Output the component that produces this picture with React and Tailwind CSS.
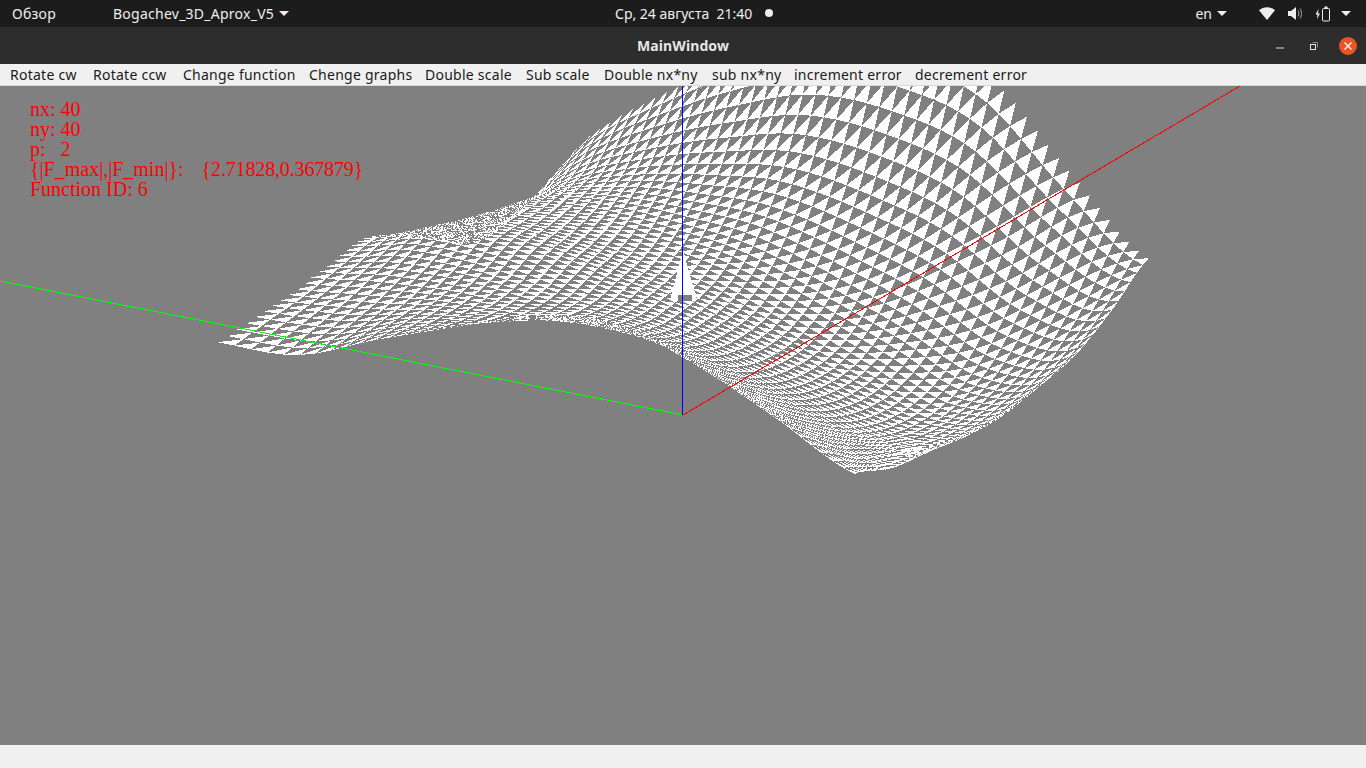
import { useMemo } from 'react';

// menu bar items, widths taken from the Qt menu bar spacing
const MENU = [
  { label: 'Rotate cw', w: 'w-[83px]' },
  { label: 'Rotate ccw', w: 'w-[90px]' },
  { label: 'Change function', w: 'w-[126px]' },
  { label: 'Chenge graphs', w: 'w-[116px]' },
  { label: 'Double scale', w: 'w-[101px]' },
  { label: 'Sub scale', w: 'w-[78px]' },
  { label: 'Double nx*ny', w: 'w-[108px]' },
  { label: 'sub nx*ny', w: 'w-[82px]' },
  { label: 'increment error', w: 'w-[121px]' },
  { label: 'decrement error', w: 'w-[120px]' },
];

const NU = 56;
const NV = 50;
const HALF_X = 294;
const HALF_Y = 368;

// surface heights along the four edges, evenly spaced keys
const Z_AB = [284, 292, 383, 467, 548, 568, 494, 385, 266];
const Z_DC = [149, 429, 607, 760, 880, 900, 834, 603, 390];
const Z_AD = [284, 294, 301, 320, 335, 274, 202, 130, 149];
const Z_BC = [266, 219, 202, 188, 184, 202, 232, 301, 390];
const SADDLE = 449;

function sample(pts, t) {
  const f = Math.min(Math.max(t, 0), 1) * (pts.length - 1);
  const i = Math.min(Math.floor(f), pts.length - 2);
  const s = f - i;
  const p0 = pts[Math.max(i - 1, 0)];
  const p1 = pts[i];
  const p2 = pts[i + 1];
  const p3 = pts[Math.min(i + 2, pts.length - 1)];
  return 0.5 * (2 * p1 + (p2 - p0) * s + (2 * p0 - 5 * p1 + 4 * p2 - p3) * s * s + (3 * p1 - p0 - 3 * p2 + p3) * s * s * s);
}

function height(u, v) {
  const ruledU = (1 - v) * sample(Z_AB, u) + v * sample(Z_DC, u);
  const ruledV = (1 - u) * sample(Z_AD, v) + u * sample(Z_BC, v);
  const bi = (1 - u) * (1 - v) * Z_AB[0] + u * (1 - v) * Z_AB[8] + (1 - u) * v * Z_DC[0] + u * v * Z_DC[8];
  // the valley behind the front hump, flatter at the front so rows pile up there
  const valley = 6.75 * u * u * (1 - u) * 4 * v * (1 - v) * (0.55 + 0.9 * v);
  return ruledU + ruledV - bi - SADDLE * valley;
}

// u runs from A to B, v from the front edge to the far edge
function surfacePoint(i, j) {
  const a = i / NU;
  const b = j / NV;
  // cell sizes are not even: bigger round A, smaller round B and along the far edge
  const u = a - (0.15 * b * Math.sin(2 * Math.PI * a)) / (2 * Math.PI) + (0.5 * (1 - b) * (1 - a) * Math.sin(Math.PI * a)) / Math.PI;
  const v = b + (0.2 * (1 - a) - 0.1 * a) * (1 - b) * Math.sin(Math.PI * b);
  const X = (2 * v - 1) * HALF_X;
  const Y = (1 - 2 * u) * HALF_Y;
  const Z = height(u, v);
  return [683 + 0.5 * X - 0.866 * Y, 415 - 0.482 * (0.612 * X + 0.354 * Y + 0.707 * Z)];
}

function buildMesh() {
  let d = '';
  for (let i = 0; i < NU; i++) {
    for (let j = 0; j < NV; j++) {
      const p1 = surfacePoint(i, j);
      const p2 = surfacePoint(i + 1, j);
      const p3 = surfacePoint(i + 1, j + 1);
      d += `M${p1[0].toFixed(1)} ${p1[1].toFixed(1)}L${p2[0].toFixed(1)} ${p2[1].toFixed(1)}L${p3[0].toFixed(1)} ${p3[1].toFixed(1)}Z`;
    }
  }
  return d;
}

function Caret({ className }) {
  return (
    <svg className={className} width="10" height="5" viewBox="0 0 10 5">
      <path d="M0 0H10L5 5Z" fill="#eeeeec" />
    </svg>
  );
}

function TopBar() {
  return (
    <div className="h-[27px] bg-[#1c1c1c] flex items-center text-[14px] text-[#eeeeec] relative">
      <span className="ml-3 w-[101px] tracking-[0.25px]">Обзор</span>
      <span className="tracking-[0.25px]">Bogachev_3D_Aprox_V5</span>
      <Caret className="ml-[5px]" />
      <div className="absolute left-[615px] top-0 h-[26px] flex items-center">
        <span className="whitespace-pre">Ср, 24 августа  21:40</span>
        <span className="ml-[13px] w-2 h-2 rounded-full bg-[#eeeeec]" />
      </div>
      <div className="ml-auto flex items-center">
        <span>en</span>
        <Caret className="ml-[5px] mr-[32px]" />
        {/* wifi */}
        <svg width="16" height="13" viewBox="0 0 16 13"><path d="M0 3.2C4.5-.9 11.5-.9 16 3.2L8 13Z" fill="#eeeeec" /></svg>
        {/* speaker */}
        <svg className="ml-[13px]" width="15" height="13" viewBox="0 0 15 13">
          <path d="M0 4H3L8 0V13L3 9H0Z" fill="#eeeeec" />
          <path d="M10 3.5C11.2 5.5 11.2 7.5 10 9.5M12 1.5C14 4.5 14 8.5 12 11.5" fill="none" stroke="#a9a9a7" strokeWidth="1" />
        </svg>
        {/* battery */}
        <svg className="ml-[12px]" width="16" height="16" viewBox="0 0 16 16">
          <path d="M3.5 3L0.5 8.5H2.5L2 13L5 7.5H3Z" fill="#eeeeec" />
          <rect x="7.5" y="2.5" width="7" height="12.5" rx="1" fill="none" stroke="#eeeeec" strokeWidth="1" />
          <rect x="9.5" y="0.5" width="3" height="2" fill="#eeeeec" />
        </svg>
        <Caret className="ml-[10px] mr-[15px]" />
      </div>
    </div>
  );
}

function TitleBar() {
  return (
    <div className="h-[37px] bg-[#2d2d2d] flex items-center relative">
      <span className="mx-auto text-[14px] font-bold text-[#e6e6e6] tracking-[0.1px]">MainWindow</span>
      <div className="absolute right-[9px] top-0 h-full flex items-center">
        <svg width="8" height="2" viewBox="0 0 8 2" className="mr-[26px] mt-[4px]"><rect width="8" height="1" y="0.5" fill="#e6e6e6" /></svg>
        <svg width="8" height="8" viewBox="0 0 8 8" className="mr-[21px]">
          <rect x="0.5" y="2.5" width="5" height="5" fill="none" stroke="#e6e6e6" />
          <path d="M2.5 0.5H7.5V5.5" fill="none" stroke="#8a8a8a" />
        </svg>
        <div className="w-[18px] h-[18px] rounded-full bg-[#e95420] flex items-center justify-center">
          <svg width="8" height="8" viewBox="0 0 8 8"><path d="M0.5 0.5L7.5 7.5M7.5 0.5L0.5 7.5" stroke="#ffffff" strokeWidth="1.3" /></svg>
        </div>
      </div>
    </div>
  );
}

export default function App() {
  const mesh = useMemo(buildMesh, []);

  return (
    <div className="w-[1366px] h-[768px] overflow-hidden flex flex-col bg-[#f0f0f0] font-['Noto_Sans',sans-serif]">
      <TopBar />
      <TitleBar />

      <div className="h-[22px] bg-[#f0f0f0] border-b border-[#d8d8d8] flex items-center pl-[10px] text-[14px] text-[#1a1a1a] tracking-[0.25px]">
        {MENU.map((m) => (
          <span key={m.label} className={`${m.w} whitespace-nowrap`}>{m.label}</span>
        ))}
      </div>

      {/* GL view */}
      <div className="h-[659px] bg-[#808080] relative overflow-hidden">
        <svg width="1366" height="659" viewBox="0 86 1366 659" className="block">
          <path d={mesh} fill="#ffffff" shapeRendering="crispEdges" />
          <path d="M683 250L697 300H670Z" fill="#ffffff" shapeRendering="crispEdges" />
          <rect x="678" y="295" width="14" height="6" fill="#808080" />
          <line x1="683" y1="415" x2="1240" y2="86" stroke="#ff0000" strokeWidth="1" shapeRendering="crispEdges" />
          <line x1="683" y1="415" x2="0" y2="281" stroke="#00ff00" strokeWidth="1" shapeRendering="crispEdges" />
          <line x1="682.5" y1="415" x2="682.5" y2="86" stroke="#0000ff" strokeWidth="1" shapeRendering="crispEdges" />
        </svg>
        <div className="absolute left-[30px] top-[13px] font-['Liberation_Serif',serif] text-[20px] leading-[20px] text-[#ff0000] whitespace-pre">
          <div>nx: 40</div>
          <div>ny: 40</div>
          <div>p:   2</div>
          <div>
            {'{|F_max|,|F_min|}:'}
            <span className="ml-[18px] tracking-[-0.15px]">{'{2.71828,0.367879}'}</span>
          </div>
          <div>Function ID: 6</div>
        </div>
      </div>

      <div className="flex-1 bg-[#f0f0f0]" />
    </div>
  );
}
